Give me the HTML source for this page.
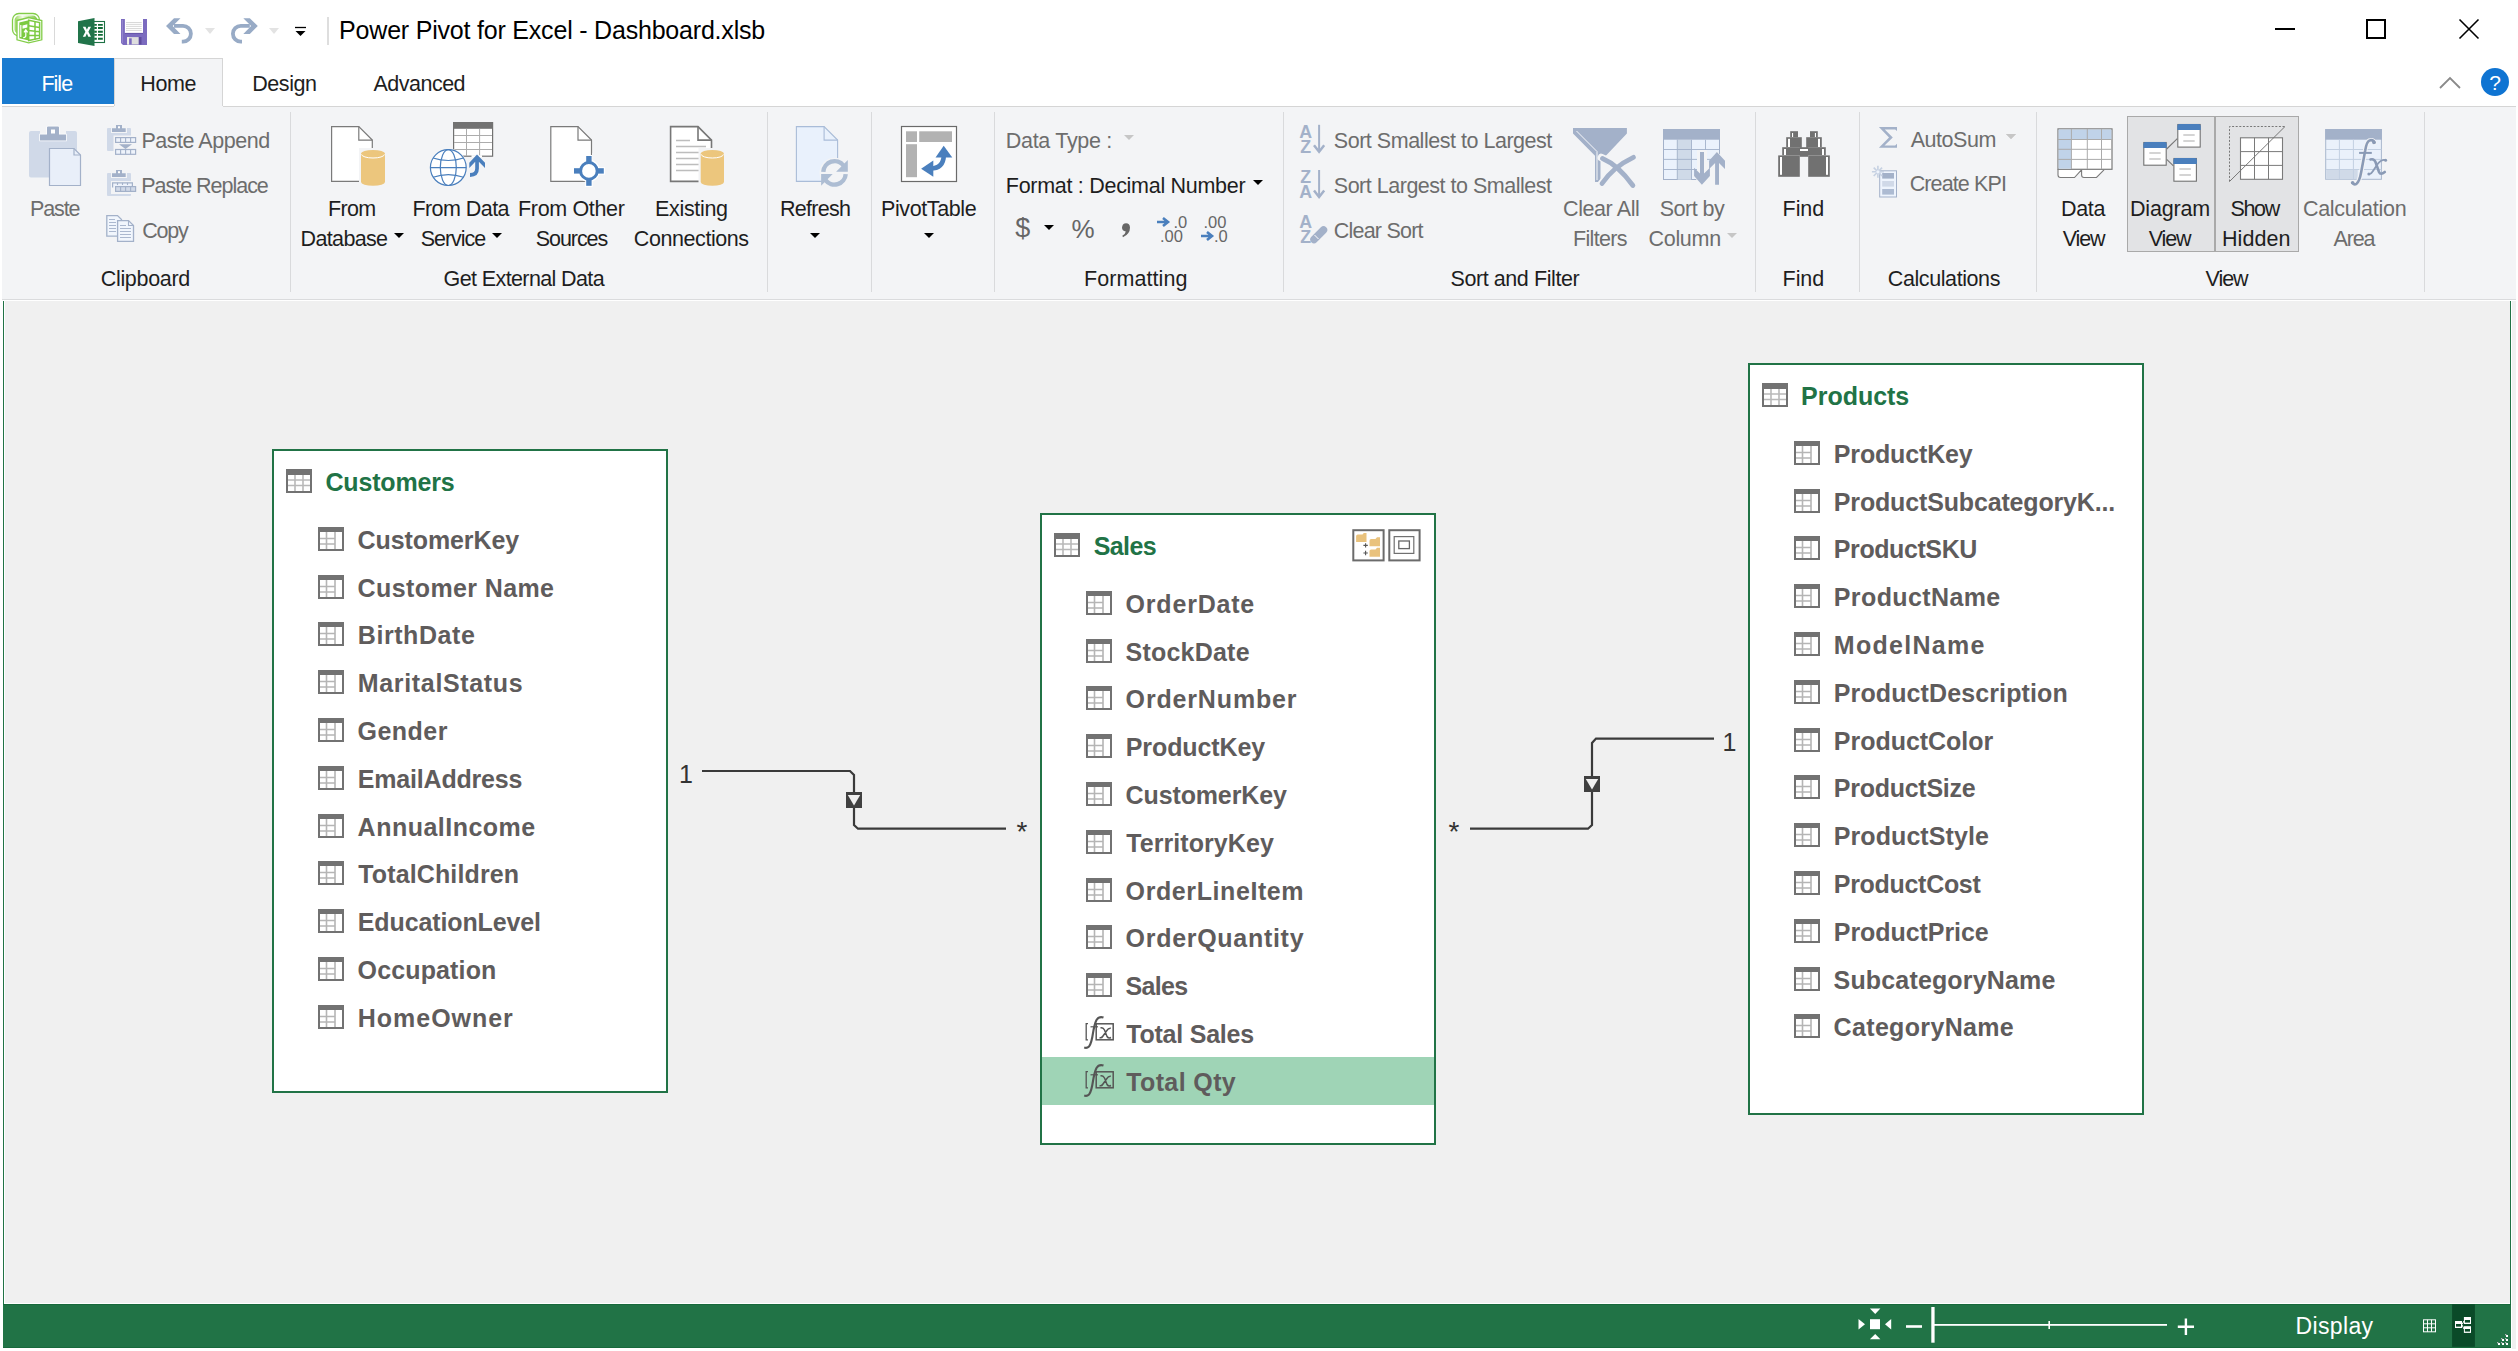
<!DOCTYPE html><html><head><meta charset="utf-8"><style>
html,body{margin:0;padding:0}
body{width:2518px;height:1351px;position:relative;overflow:hidden;background:#fff;font-family:'Liberation Sans', sans-serif}
.t{position:absolute;white-space:nowrap}
svg{overflow:visible}
</style></head><body>
<div class="t" style="left:339.10px;top:15.1px;font-size:25px;line-height:30.00px;color:#000;font-weight:400;letter-spacing:-0.200px;">Power Pivot for Excel - Dashboard.xlsb</div>
<div style="position:absolute;left:54px;top:17px;width:1px;height:28px;background:#d9d9d9"></div>
<div style="position:absolute;left:327px;top:17px;width:2px;height:28px;background:#dedede"></div>
<div style="position:absolute;left:2275px;top:28px;width:20px;height:2px;background:#000"></div>
<div style="position:absolute;left:2366px;top:19px;width:20px;height:20px;border:2px solid #000;box-sizing:border-box"></div>
<svg style="position:absolute;left:2459px;top:19px;" width="20" height="20" viewBox="0 0 20 20"><path d="M0.5 0.5L19.5 19.5M19.5 0.5L0.5 19.5" stroke="#000" stroke-width="1.6"/></svg>
<div style="position:absolute;left:2px;top:58px;width:112px;height:46px;background:#1a7bd0"></div>
<div class="t" style="left:41.40px;top:71.8px;font-size:21.5px;line-height:25.80px;color:#fff;font-weight:400;letter-spacing:-0.967px;">File</div>
<div style="position:absolute;left:114px;top:58px;width:109px;height:49px;background:#f3f4f6;border:1px solid #d5d5d5;border-bottom:none;box-sizing:border-box"></div>
<div class="t" style="left:140.20px;top:71.8px;font-size:21.5px;line-height:25.80px;color:#1e1e1e;font-weight:400;letter-spacing:-0.333px;">Home</div>
<div class="t" style="left:252.30px;top:71.8px;font-size:21.5px;line-height:25.80px;color:#1e1e1e;font-weight:400;letter-spacing:-0.460px;">Design</div>
<div class="t" style="left:373.50px;top:71.8px;font-size:21.5px;line-height:25.80px;color:#1e1e1e;font-weight:400;letter-spacing:-0.514px;">Advanced</div>
<svg style="position:absolute;left:2438px;top:76px;" width="24" height="14" viewBox="0 0 24 14"><path d="M2 12L12 2L22 12" fill="none" stroke="#8a8a8a" stroke-width="1.8"/></svg>
<div style="position:absolute;left:2481px;top:68px;width:28px;height:28px;border-radius:50%;background:#0f74d2"></div>
<div class="t" style="left:2481.0px;width:28px;text-align:center;top:70.1px;font-size:21px;line-height:25.20px;color:#fff;font-weight:400;">?</div>
<div style="position:absolute;left:2px;top:106px;width:2514px;height:193px;background:#f3f4f6"></div>
<div style="position:absolute;left:2px;top:106px;width:112px;height:1px;background:#d5d5d5"></div>
<div style="position:absolute;left:223px;top:106px;width:2293px;height:1px;background:#d5d5d5"></div>
<div style="position:absolute;left:2px;top:299px;width:2514px;height:1px;background:#dadbdd"></div>
<div style="position:absolute;left:290px;top:112px;width:1px;height:180px;background:#d9dadc"></div>
<div style="position:absolute;left:767px;top:112px;width:1px;height:180px;background:#d9dadc"></div>
<div style="position:absolute;left:871px;top:112px;width:1px;height:180px;background:#d9dadc"></div>
<div style="position:absolute;left:994px;top:112px;width:1px;height:180px;background:#d9dadc"></div>
<div style="position:absolute;left:1283px;top:112px;width:1px;height:180px;background:#d9dadc"></div>
<div style="position:absolute;left:1755px;top:112px;width:1px;height:180px;background:#d9dadc"></div>
<div style="position:absolute;left:1859px;top:112px;width:1px;height:180px;background:#d9dadc"></div>
<div style="position:absolute;left:2036px;top:112px;width:1px;height:180px;background:#d9dadc"></div>
<div style="position:absolute;left:2424px;top:112px;width:1px;height:180px;background:#d9dadc"></div>
<div class="t" style="left:100.70px;top:266.6px;font-size:21.5px;line-height:25.80px;color:#1e1e1e;font-weight:400;letter-spacing:-0.300px;">Clipboard</div>
<div class="t" style="left:443.60px;top:266.6px;font-size:21.5px;line-height:25.80px;color:#1e1e1e;font-weight:400;letter-spacing:-0.613px;">Get External Data</div>
<div class="t" style="left:1084.00px;top:266.6px;font-size:21.5px;line-height:25.80px;color:#1e1e1e;font-weight:400;letter-spacing:0.067px;">Formatting</div>
<div class="t" style="left:1450.50px;top:266.6px;font-size:21.5px;line-height:25.80px;color:#1e1e1e;font-weight:400;letter-spacing:-0.421px;">Sort and Filter</div>
<div class="t" style="left:1782.60px;top:266.6px;font-size:21.5px;line-height:25.80px;color:#1e1e1e;font-weight:400;letter-spacing:-0.067px;">Find</div>
<div class="t" style="left:1887.80px;top:266.6px;font-size:21.5px;line-height:25.80px;color:#1e1e1e;font-weight:400;letter-spacing:-0.409px;">Calculations</div>
<div class="t" style="left:2205.50px;top:266.6px;font-size:21.5px;line-height:25.80px;color:#1e1e1e;font-weight:400;letter-spacing:-1.033px;">View</div>
<div class="t" style="left:30.00px;top:196.8px;font-size:21.5px;line-height:25.80px;color:#6d6d6d;font-weight:400;letter-spacing:-1.125px;">Paste</div>
<div class="t" style="left:328.00px;top:196.8px;font-size:21.5px;line-height:25.80px;color:#1e1e1e;font-weight:400;letter-spacing:-0.667px;">From</div>
<div class="t" style="left:300.60px;top:226.6px;font-size:21.5px;line-height:25.80px;color:#1e1e1e;font-weight:400;letter-spacing:-0.657px;">Database</div>
<div class="t" style="left:412.40px;top:196.8px;font-size:21.5px;line-height:25.80px;color:#1e1e1e;font-weight:400;letter-spacing:-0.550px;">From Data</div>
<div class="t" style="left:420.80px;top:226.6px;font-size:21.5px;line-height:25.80px;color:#1e1e1e;font-weight:400;letter-spacing:-1.050px;">Service</div>
<div class="t" style="left:518.00px;top:196.8px;font-size:21.5px;line-height:25.80px;color:#1e1e1e;font-weight:400;letter-spacing:-0.333px;">From Other</div>
<div class="t" style="left:535.70px;top:226.6px;font-size:21.5px;line-height:25.80px;color:#1e1e1e;font-weight:400;letter-spacing:-1.050px;">Sources</div>
<div class="t" style="left:655.00px;top:196.8px;font-size:21.5px;line-height:25.80px;color:#1e1e1e;font-weight:400;letter-spacing:-0.329px;">Existing</div>
<div class="t" style="left:633.80px;top:226.6px;font-size:21.5px;line-height:25.80px;color:#1e1e1e;font-weight:400;letter-spacing:-0.420px;">Connections</div>
<div class="t" style="left:780.00px;top:196.8px;font-size:21.5px;line-height:25.80px;color:#1e1e1e;font-weight:400;letter-spacing:-0.733px;">Refresh</div>
<div class="t" style="left:881.00px;top:196.8px;font-size:21.5px;line-height:25.80px;color:#1e1e1e;font-weight:400;letter-spacing:-0.389px;">PivotTable</div>
<div class="t" style="left:1563.00px;top:196.8px;font-size:21.5px;line-height:25.80px;color:#6d6d6d;font-weight:400;letter-spacing:-0.400px;">Clear All</div>
<div class="t" style="left:1573.00px;top:226.6px;font-size:21.5px;line-height:25.80px;color:#6d6d6d;font-weight:400;letter-spacing:-0.667px;">Filters</div>
<div class="t" style="left:1659.70px;top:196.8px;font-size:21.5px;line-height:25.80px;color:#6d6d6d;font-weight:400;letter-spacing:-0.500px;">Sort by</div>
<div class="t" style="left:1648.50px;top:226.6px;font-size:21.5px;line-height:25.80px;color:#6d6d6d;font-weight:400;letter-spacing:-0.300px;">Column</div>
<div class="t" style="left:1782.60px;top:196.8px;font-size:21.5px;line-height:25.80px;color:#1e1e1e;font-weight:400;letter-spacing:-0.067px;">Find</div>
<div class="t" style="left:2061.00px;top:196.8px;font-size:21.5px;line-height:25.80px;color:#1e1e1e;font-weight:400;letter-spacing:-0.333px;">Data</div>
<div class="t" style="left:2062.80px;top:226.6px;font-size:21.5px;line-height:25.80px;color:#1e1e1e;font-weight:400;letter-spacing:-1.133px;">View</div>
<div style="position:absolute;left:2127px;top:116px;width:172px;height:136px;background:#e2e3e5;border:1px solid #a9a9a9;box-sizing:border-box"></div>
<div style="position:absolute;left:2214px;top:116px;width:2px;height:136px;background:#a9a9a9"></div>
<div class="t" style="left:2130.00px;top:196.8px;font-size:21.5px;line-height:25.80px;color:#1e1e1e;font-weight:400;letter-spacing:-0.183px;">Diagram</div>
<div class="t" style="left:2148.80px;top:226.6px;font-size:21.5px;line-height:25.80px;color:#1e1e1e;font-weight:400;letter-spacing:-1.133px;">View</div>
<div class="t" style="left:2230.40px;top:196.8px;font-size:21.5px;line-height:25.80px;color:#1e1e1e;font-weight:400;letter-spacing:-1.300px;">Show</div>
<div class="t" style="left:2222.00px;top:226.6px;font-size:21.5px;line-height:25.80px;color:#1e1e1e;font-weight:400;letter-spacing:0.080px;">Hidden</div>
<div class="t" style="left:2302.90px;top:196.8px;font-size:21.5px;line-height:25.80px;color:#6d6d6d;font-weight:400;letter-spacing:-0.260px;">Calculation</div>
<div class="t" style="left:2333.50px;top:226.6px;font-size:21.5px;line-height:25.80px;color:#6d6d6d;font-weight:400;letter-spacing:-1.167px;">Area</div>
<svg style="position:absolute;left:394px;top:233px;" width="10" height="5" viewBox="0 0 10 5"><path d="M0 0H10L5.0 5Z" fill="#000"/></svg>
<svg style="position:absolute;left:492px;top:233px;" width="10" height="5" viewBox="0 0 10 5"><path d="M0 0H10L5.0 5Z" fill="#000"/></svg>
<svg style="position:absolute;left:810px;top:233px;" width="10" height="5" viewBox="0 0 10 5"><path d="M0 0H10L5.0 5Z" fill="#000"/></svg>
<svg style="position:absolute;left:924px;top:233px;" width="10" height="5" viewBox="0 0 10 5"><path d="M0 0H10L5.0 5Z" fill="#000"/></svg>
<svg style="position:absolute;left:1727px;top:233px;" width="10" height="5" viewBox="0 0 10 5"><path d="M0 0H10L5.0 5Z" fill="#c6c6c6"/></svg>
<div class="t" style="left:141.40px;top:129.1px;font-size:21.5px;line-height:25.80px;color:#6d6d6d;font-weight:400;letter-spacing:-0.464px;">Paste Append</div>
<div class="t" style="left:141.20px;top:173.6px;font-size:21.5px;line-height:25.80px;color:#6d6d6d;font-weight:400;letter-spacing:-1.017px;">Paste Replace</div>
<div class="t" style="left:142.20px;top:218.7px;font-size:21.5px;line-height:25.80px;color:#6d6d6d;font-weight:400;letter-spacing:-1.200px;">Copy</div>
<div class="t" style="left:1005.80px;top:128.9px;font-size:21.5px;line-height:25.80px;color:#6d6d6d;font-weight:400;letter-spacing:-0.310px;">Data Type :</div>
<svg style="position:absolute;left:1124px;top:135px;" width="10" height="5" viewBox="0 0 10 5"><path d="M0 0H10L5.0 5Z" fill="#c6c6c6"/></svg>
<div class="t" style="left:1005.80px;top:173.9px;font-size:21.5px;line-height:25.80px;color:#1e1e1e;font-weight:400;letter-spacing:-0.286px;">Format : Decimal Number</div>
<svg style="position:absolute;left:1253px;top:180px;" width="10" height="5" viewBox="0 0 10 5"><path d="M0 0H10L5.0 5Z" fill="#000"/></svg>
<div class="t" style="left:1333.80px;top:128.9px;font-size:21.5px;line-height:25.80px;color:#6d6d6d;font-weight:400;letter-spacing:-0.474px;">Sort Smallest to Largest</div>
<div class="t" style="left:1333.80px;top:173.9px;font-size:21.5px;line-height:25.80px;color:#6d6d6d;font-weight:400;letter-spacing:-0.487px;">Sort Largest to Smallest</div>
<div class="t" style="left:1333.80px;top:218.5px;font-size:21.5px;line-height:25.80px;color:#6d6d6d;font-weight:400;letter-spacing:-0.789px;">Clear Sort</div>
<div class="t" style="left:1910.70px;top:128.1px;font-size:21.5px;line-height:25.80px;color:#6d6d6d;font-weight:400;letter-spacing:-0.450px;">AutoSum</div>
<svg style="position:absolute;left:2006px;top:134px;" width="10" height="5" viewBox="0 0 10 5"><path d="M0 0H10L5.0 5Z" fill="#c6c6c6"/></svg>
<div class="t" style="left:1909.70px;top:171.5px;font-size:21.5px;line-height:25.80px;color:#6d6d6d;font-weight:400;letter-spacing:-0.878px;">Create KPI</div>
<div style="position:absolute;left:2px;top:300px;width:2516px;height:1051px;background:#fff"></div>
<div style="position:absolute;left:5px;top:301px;width:2505px;height:1002px;background:#f0f0f0"></div>
<div style="position:absolute;left:3px;top:301px;width:1px;height:1047px;background:#217346"></div>
<div style="position:absolute;left:2510px;top:301px;width:1px;height:1047px;background:#217346"></div>
<div style="position:absolute;left:2512px;top:301px;width:4px;height:1048px;background:#f0f0f0"></div>
<svg style="position:absolute;left:0;top:0" width="2518" height="1351">
<defs><linearGradient id="ppg" x1="0" x2="1"><stop offset="0" stop-color="#9ad85f"/><stop offset="0.35" stop-color="#f4fbe9"/><stop offset="1" stop-color="#7cc93f"/></linearGradient></defs>
<rect x="12.5" y="13.5" width="27" height="22.5" rx="6.5" fill="#fff" stroke="#82cd48" stroke-width="1.3"/>
<rect x="14.6" y="15.6" width="22.8" height="18.3" rx="4.5" fill="url(#ppg)"/>
<path d="M17 20.5L28.7 17.5L41.8 20.5V39.8L28.7 42.8L17 39.8Z" fill="#fff" stroke="#82cd48" stroke-width="1.3"/>
<path d="M19.3 22.6L28.7 20.2V40.6L19.3 38.2Z" fill="#7cca42"/>
<path d="M28.7 20.2L39.6 22.6V38.2L28.7 40.6Z" fill="#fff" stroke="#7cca42" stroke-width="1.5"/>
<path d="M35 21.5V39.4M28.7 25.8L39.6 27.6M28.7 30.6L39.6 31.8M28.7 35.4L39.6 35.4" stroke="#7cca42" stroke-width="1.5"/>
<path d="M20.8 25V37" stroke="#fff" stroke-width="1.2"/>
<path d="M22.5 25.5L27.3 24.3V27.5L22.5 28.7Z" fill="#fff"/>
<path d="M25.8 36.5V30.5M24 32.3L25.8 29.8L27.6 32.3M23.2 37.5Q25.8 37.8 25.8 35" stroke="#fff" stroke-width="1.2" fill="none"/>

<rect x="93.5" y="21.5" width="11" height="21" fill="#fff" stroke="#1e7145" stroke-width="1.1"/>
<path d="M94.2 24.9H96.8M98 24.9H102.8M94.2 28H96.8M98 28H102.8M94.2 31.8H96.8M98 31.8H102.8M94.2 34.9H96.8M98 34.9H102.8M94.2 38.7H96.8M98 38.7H102.8" stroke="#0f6b35" stroke-width="1.9"/>
<path d="M78 21.2L94.5 18V46L78 43Z" fill="#21744a"/>
<path d="M82.8 26.8H85.5L86.9 29.8L88.3 26.8H91L88.4 31.7L91 36.7H88.3L86.9 33.6L85.4 36.7H82.8L85.4 31.7Z" fill="#fff"/>

<path d="M121 19H147V45H123L121 43Z" fill="#7b6bbf"/>
<path d="M122.3 20V43" stroke="#9a8bd3" stroke-width="1"/>
<rect x="124.9" y="19" width="18.1" height="14.1" fill="#fff"/>
<path d="M124.9 33.4H143" stroke="#5f4ea3" stroke-width="0.9"/>
<path d="M126 22.5H141.7M126 24.4H141.7M126 26.4H141.7M126 28.5H141.7M126 30.4H141.7" stroke="#cfcfcf" stroke-width="0.8"/>
<rect x="127.1" y="37.1" width="11.7" height="7.4" fill="#dedede"/>
<rect x="127.1" y="37.1" width="2" height="7.4" fill="#f3f3ea"/>
<rect x="129.1" y="38.3" width="2.6" height="6.2" fill="#7b6bbf"/>
<rect x="138.8" y="37" width="2.7" height="7.5" fill="#5e4c9e"/>
<path d="M174 25.8H183A7.9 7.9 0 0 1 183 41.6H181.8" fill="none" stroke="#98abc6" stroke-width="3.8"/><path d="M166 26L174 18.2H180.5L172.7 26L180.5 33.9H174Z" fill="#98abc6"/><g transform="translate(423.8,0) scale(-1,1)"><path d="M174 25.8H183A7.9 7.9 0 0 1 183 41.6H181.8" fill="none" stroke="#98abc6" stroke-width="3.8"/><path d="M166 26L174 18.2H180.5L172.7 26L180.5 33.9H174Z" fill="#98abc6"/></g><path d="M205 28H215L210 34Z" fill="#e3e3e3"/><path d="M269 28H279L274 34Z" fill="#e3e3e3"/><path d="M295 27.5H306" stroke="#000" stroke-width="1.3"/><path d="M295.5 31H305.5L300.5 36Z" fill="#000"/>
<path d="M31 131H40V140.5H66V131H75Q77 131 77 133V177.5H31Q29 177.5 29 175.5V133Q29 131 31 131Z" fill="#d0d9e8"/>
<path d="M40 134.5H47V127.5Q47 126.5 48 126.5H58Q59 126.5 59 127.5V134.5H66V140.5H40Z" fill="#a3b1c9" stroke="#fff" stroke-width="1.4" paint-order="stroke"/>
<rect x="51" y="129.5" width="4" height="4" fill="#fff"/>
<path d="M49.5 148.5H74L80.5 155V185.5H49.5Z" fill="#e9eff9" stroke="#a3b1c9" stroke-width="1.2"/>
<path d="M74 148.5V155H80.5" fill="none" stroke="#a3b1c9" stroke-width="1.2"/>

<rect x="107" y="128" width="24" height="23" rx="1" fill="#d0d9e8"/>
<path d="M111 127H127V133H111Z" fill="#f3f4f6"/>
<path d="M112 128.2H116V125.1H122V128.2H125.7V132H112Z" fill="#a3b1c9"/>
<rect x="118" y="126.3" width="2" height="2" fill="#fff"/>
<rect x="113.5" y="135.5" width="24" height="21" fill="#f3f4f6"/>
<rect x="115.6" y="137.6" width="20" height="4.8" fill="#eef3fb" stroke="#a3b1c9" stroke-width="1.2"/>
<path d="M120.6 137.6V142.4M125.6 137.6V142.4M130.6 137.6V142.4" stroke="#a3b1c9" stroke-width="1.1"/>
<path d="M119 144.2H132L125.5 149Z" fill="#a3b1c9"/>
<rect x="115.6" y="149.5" width="20" height="4.8" fill="#eef3fb" stroke="#a3b1c9" stroke-width="1.2"/>
<path d="M120.6 149.5V154.3M125.6 149.5V154.3M130.6 149.5V154.3" stroke="#a3b1c9" stroke-width="1.1"/>

<rect x="107" y="173" width="24" height="23" rx="1" fill="#d0d9e8"/>
<path d="M111 172H127V178H111Z" fill="#f3f4f6"/>
<path d="M112 173.2H116V170H122V173.2H125.7V177H112Z" fill="#a3b1c9"/>
<rect x="118" y="171.2" width="2" height="2" fill="#fff"/>
<rect x="111" y="181" width="26" height="13" fill="#f3f4f6"/>
<path d="M112.6 187.5V182.8H132.4V187" fill="#eef3fb" stroke="#a3b1c9" stroke-width="1.2"/>
<path d="M117.5 182.8V185M122.5 182.8V185M127.5 182.8V185" stroke="#a3b1c9" stroke-width="1.1"/>
<rect x="115.6" y="186.6" width="20" height="4.8" fill="#d0d9e8" stroke="#a3b1c9" stroke-width="1.2"/>
<path d="M120.6 186.6V191.4M125.6 186.6V191.4M130.6 186.6V191.4" stroke="#a3b1c9" stroke-width="1.1"/>

<path d="M106.8 215.6H117.5L121.5 219.5V236.2H106.8Z" fill="#f1f6fd" stroke="#a3b1c9" stroke-width="1.3"/>
<path d="M109 219.5H115M109 222.5H116M109 225.5H116M109 228.5H116M109 231.5H116" stroke="#a3b1c9" stroke-width="0.9"/>
<path d="M117.6 220.6H128.5L133.5 225.5V241.3H117.6Z" fill="#f1f6fd" stroke="#a3b1c9" stroke-width="1.3"/>
<path d="M128.5 220.6V225.5H133.5" fill="none" stroke="#a3b1c9" stroke-width="1.1"/>
<path d="M120 225.5H126M120 228.5H131M120 231.5H131M120 234.5H131M120 237.5H131" stroke="#a3b1c9" stroke-width="0.9"/>
<path d="M331.6 126.6H358.8L372.3 140.1V181.4H331.6Z" fill="#fff" stroke="#7a7a7a" stroke-width="1.2"/><path d="M358.8 126.6V140.1H372.3" fill="none" stroke="#7a7a7a" stroke-width="1.2"/><rect x="359" y="148" width="28" height="40" fill="#f3f4f6"/><path d="M361 153.6A12.0 3.6 0 0 1 385 153.6V182.1A12.0 3.6 0 0 1 361 182.1Z" fill="#ecc67d"/><path d="M361.6 154.4A11.4 3.6 0 0 0 384.4 154.4" fill="none" stroke="#fff" stroke-width="1"/>
<rect x="453.6" y="122.6" width="39" height="33.6" fill="#fff" stroke="#727272" stroke-width="1.2"/>
<rect x="453" y="122.3" width="40" height="6.5" fill="#727272"/>
<path d="M466.5 128.8V156M479.6 128.8V156M454 135.5H492M454 142.5H492M454 149.5H492" stroke="#acacac" stroke-width="1"/>
<rect x="471.5" y="155.2" width="10.5" height="2" fill="#fff"/>
<circle cx="448.3" cy="167.6" r="19" fill="#f3f4f6"/>
<circle cx="448.3" cy="167.6" r="17.9" fill="#fff" stroke="#4a7fbd" stroke-width="1.2"/>
<ellipse cx="448.3" cy="167.6" rx="8" ry="17.9" fill="none" stroke="#4a7fbd" stroke-width="1.2"/>
<path d="M430.4 167.6H466.2M433 158Q448.3 163 463.6 158M433 177.2Q448.3 172 463.6 177.2" fill="none" stroke="#4a7fbd" stroke-width="1.2"/>
<path d="M477 154.4L485 162.7V168L478.9 161.8V168.5Q478.9 176.9 470 176.9V173Q475.2 173 475.2 168.5V161.8L469.3 168V162.7Z" fill="#4a7fbd"/>
<path d="M550.8 126.6H578.0L591.5 140.1V181.4H550.8Z" fill="#fff" stroke="#7a7a7a" stroke-width="1.2"/><path d="M578.0 126.6V140.1H591.5" fill="none" stroke="#7a7a7a" stroke-width="1.2"/>
<circle cx="588.9" cy="170.9" r="8.3" fill="none" stroke="#fff" stroke-width="5.5"/><rect x="585.2" y="155" width="7.4" height="32" fill="#fff"/><rect x="573" y="167.2" width="32" height="7.4" fill="#fff"/><rect x="592" y="153" width="4" height="3" fill="#f3f4f6"/><rect x="605" y="165" width="3" height="12" fill="#f3f4f6"/>
<circle cx="588.9" cy="170.9" r="8.3" fill="#fff" stroke="#4a7fbd" stroke-width="3"/>
<rect x="586.2" y="156" width="5.4" height="6" fill="#4a7fbd"/><rect x="586.2" y="179.8" width="5.4" height="6" fill="#4a7fbd"/>
<rect x="574" y="168.2" width="6" height="5.4" fill="#4a7fbd"/><rect x="597.8" y="168.2" width="6" height="5.4" fill="#4a7fbd"/>
<path d="M670.6 126.6H698.0L711.5 140.1V181.4H670.6Z" fill="#fff" stroke="#777" stroke-width="1.6"/><path d="M698.0 126.6V140.1H711.5" fill="none" stroke="#777" stroke-width="1.6"/><path d="M676 140.5H690M676 146.5H706M676 152.5H706M676 158.5H706M676 164.5H706M676 170.5H706" stroke="#bdbdbd" stroke-width="1.6"/><rect x="698.5" y="148" width="28" height="40" fill="#f3f4f6"/><path d="M700.7 153.6A11.649999999999977 3.6 0 0 1 724 153.6V182.1A11.649999999999977 3.6 0 0 1 700.7 182.1Z" fill="#ecc67d"/><path d="M701.3000000000001 154.4A11.049999999999978 3.6 0 0 0 723.4 154.4" fill="none" stroke="#fff" stroke-width="1"/><path d="M796.4 126.6H824.1L837.6 140.1V181.4H796.4Z" fill="#e9f1fc" stroke="#a9bcd8" stroke-width="1.1"/><path d="M824.1 126.6V140.1H837.6" fill="none" stroke="#a9bcd8" stroke-width="1.1"/>
<circle cx="834.5" cy="172.8" r="15" fill="#f3f4f6"/>
<path d="M823.3 171.8A11.3 11.3 0 0 1 843.5 165.5" fill="none" stroke="#adbdd3" stroke-width="4.4"/>
<path d="M845.7 174.1A11.3 11.3 0 0 1 825.5 180.2" fill="none" stroke="#adbdd3" stroke-width="4.4"/>
<path d="M847.8 159.9V171.8H836.1Z" fill="#adbdd3"/>
<path d="M821.1 185.8V174.1H832.7Z" fill="#adbdd3"/>

<rect x="901.5" y="126.5" width="55" height="55" fill="#fff" stroke="#6a6a6a" stroke-width="1.2"/>
<rect x="906" y="131.3" width="11" height="10.7" fill="#b2b2b2"/>
<rect x="919.2" y="131.3" width="32.8" height="10.7" fill="#b2b2b2"/>
<rect x="906" y="144.2" width="11" height="33" fill="#b2b2b2"/>
<path d="M930 168.6Q943.6 168.6 943.8 155" fill="none" stroke="#4a7fbd" stroke-width="4.6"/>
<path d="M921.1 168.7L933.3 160.5V176.8Z" fill="#4a7fbd"/>
<path d="M943.7 145.7L935.5 157.6H952.3Z" fill="#4a7fbd"/>

<text x="1022.8" y="237" text-anchor="middle" font-family="Liberation Sans" font-size="27" fill="#666666">$</text>
<path d="M1044 225H1054L1049 230Z" fill="#000"/>
<text x="1083" y="238.3" text-anchor="middle" font-family="Liberation Sans" font-size="26" fill="#666666">%</text>
<path d="M1124.5 223.5Q1129.6 222.5 1130 227.5Q1130 234 1123 237.3L1122.3 235.8Q1125.5 233.8 1125.8 231.5Q1122 231 1122 227.5Q1122.5 224 1124.5 223.5Z" fill="#666666"/>
<text x="1173.5" y="228.2" font-family="Liberation Sans" font-size="16.5" fill="#666666">.0</text>
<text x="1160" y="242.2" font-family="Liberation Sans" font-size="16.5" fill="#666666">.00</text>
<path d="M1157 222H1167M1163 218L1168 222L1163 226" fill="none" stroke="#4a7fbd" stroke-width="2.6"/>
<text x="1203.5" y="228.2" font-family="Liberation Sans" font-size="16.5" fill="#666666">.00</text>
<text x="1214" y="242.2" font-family="Liberation Sans" font-size="16.5" fill="#666666">.0</text>
<path d="M1201 236H1211M1207 232L1212 236L1207 240" fill="none" stroke="#4a7fbd" stroke-width="2.6"/>
<text x="1305.6" y="137.8" text-anchor="middle" font-family="Liberation Sans" font-weight="700" font-size="17.8" fill="#a3b1c9">A</text><text x="1305.6" y="153.2" text-anchor="middle" font-family="Liberation Sans" font-weight="700" font-size="17.8" fill="#a3b1c9">Z</text><path d="M1319.1 124.8V151.3" stroke="#a3b1c9" stroke-width="2"/><path d="M1314 145.3L1319.1 151.8L1324.2 145.3" fill="none" stroke="#a3b1c9" stroke-width="2.5"/><text x="1305.6" y="183" text-anchor="middle" font-family="Liberation Sans" font-weight="700" font-size="17.8" fill="#a3b1c9">Z</text><text x="1305.6" y="198.4" text-anchor="middle" font-family="Liberation Sans" font-weight="700" font-size="17.8" fill="#a3b1c9">A</text><path d="M1319.1 170V196.5" stroke="#a3b1c9" stroke-width="2"/><path d="M1314 190.5L1319.1 197L1324.2 190.5" fill="none" stroke="#a3b1c9" stroke-width="2.5"/><text x="1305.6" y="227.7" text-anchor="middle" font-family="Liberation Sans" font-weight="700" font-size="17.8" fill="#a3b1c9">A</text><text x="1305.6" y="243.1" text-anchor="middle" font-family="Liberation Sans" font-weight="700" font-size="17.8" fill="#a3b1c9">Z</text><path d="M1314 239.5L1323.5 230" stroke="#a3b1c9" stroke-width="7.5" stroke-linecap="round"/><path d="M1314.5 235L1318.5 239" stroke="#fff" stroke-width="1"/>
<path d="M1573 128H1626.9V133.5L1607.5 154L1600.5 161V181.9H1595V155.8L1573 133.5Z" fill="#a3b1c9"/>
<path d="M1576.5 131L1597 151.5V180" fill="none" stroke="#fff" stroke-width="0.9"/>
<path d="M1601.3 157.5Q1618 164 1632.9 185.5" fill="none" stroke="#f3f4f6" stroke-width="7.5" stroke-linecap="round"/>
<path d="M1633.4 157.3Q1613 167 1601 184.2" fill="none" stroke="#f3f4f6" stroke-width="7.5" stroke-linecap="round"/>
<path d="M1602.5 158.5Q1618 165 1632.9 185.5" fill="none" stroke="#a3b1c9" stroke-width="4.8" stroke-linecap="round"/>
<path d="M1633.4 157.3Q1613 167 1602 183.5" fill="none" stroke="#a3b1c9" stroke-width="4.8" stroke-linecap="round"/>

<rect x="1663.5" y="129.5" width="56" height="50" fill="#ebf2fc" stroke="#a3b1c9" stroke-width="1"/>
<rect x="1677.3" y="139.7" width="14.2" height="40" fill="#cfdae8"/>
<rect x="1663" y="129" width="57" height="10.7" fill="#a3b1c9"/>
<path d="M1677.3 139.7V179.8M1691.5 139.7V179.8M1705.5 139.7V179.8M1663.5 149.5H1719.5M1663.5 159.4H1719.5M1663.5 169.5H1719.5" stroke="#a3b1c9" stroke-width="0.9"/>
<path d="M1697 150V175H1692L1702 185.5L1712 175H1707V150Z" fill="#f3f4f6"/>
<path d="M1707 188V162H1712L1717 151L1726 162V188Z" fill="#f3f4f6"/>
<path d="M1700 152H1704V173.5L1709.9 167.8V176L1701.9 184.8L1694.1 176V167.8L1700 173.5Z" fill="#a3b1c9"/>
<path d="M1715.1 184.8H1719V163L1725 169V160.8L1716.9 152.1L1709.1 160.8V169L1715.1 163Z" fill="#a3b1c9"/>
<rect x="1790.2" y="131.2" width="7.8" height="6" fill="#717171"/><rect x="1810.0" y="131.2" width="7.8" height="6" fill="#717171"/><rect x="1786.2" y="137.2" width="15.6" height="10" fill="#717171"/><rect x="1806.2" y="137.2" width="15.6" height="10" fill="#717171"/><rect x="1782.2" y="147.2" width="19.6" height="8.2" fill="#717171"/><rect x="1806.2" y="147.2" width="19.6" height="8.2" fill="#717171"/><rect x="1778.2" y="155.4" width="21.6" height="21.4" fill="#717171"/><rect x="1808.2" y="155.4" width="21.6" height="21.4" fill="#717171"/><rect x="1799.8" y="147.2" width="8.4" height="9.6" fill="#717171"/><rect x="1792" y="133" width="1.1" height="4" fill="#fff"/><rect x="1814.9" y="133" width="1.1" height="4" fill="#fff"/><rect x="1788" y="138.8" width="2" height="8.2" fill="#fff"/><rect x="1818.0" y="138.8" width="2" height="8.2" fill="#fff"/><rect x="1784" y="149" width="2" height="6" fill="#fff"/><rect x="1822.0" y="149" width="2" height="6" fill="#fff"/><rect x="1780" y="157" width="2" height="17.8" fill="#fff"/><rect x="1826.0" y="157" width="2" height="17.8" fill="#fff"/><rect x="1800" y="149" width="8" height="2" fill="#fff"/>
<path d="M1878.9 127.1H1897V131L1895.2 129.6H1884.8L1892.8 137.5L1884.5 145.4H1895.2L1897 143.8V147.8H1878.9L1889 137.5Z" fill="#a3b1c9"/>
<path d="M2006 134H2016L2011 139Z" fill="#c6c6c6"/>
<rect x="1879.7" y="170.8" width="16.8" height="26.2" fill="#eef4fd" stroke="#a3b1c9" stroke-width="1"/>
<rect x="1882.2" y="173" width="11.8" height="5.6" fill="#a3b1c9"/>
<rect x="1882.2" y="181" width="11.8" height="5.6" fill="#d0d9e8"/>
<rect x="1882.2" y="189" width="11.8" height="5.6" fill="#adbbd2"/>
<path d="M1877.9 165.8V177.8M1871.9 171.8H1883.9M1873.7 167.6L1882.1 176M1882.1 167.6L1873.7 176" stroke="#c6d1e2" stroke-width="1.6"/><circle cx="1877.9" cy="171.8" r="1.6" fill="#eef3fb"/>

<path d="M2058 169.3V175Q2058 177.5 2060.5 177.5H2074.5L2081.5 169.8M2081.6 169.5V175Q2081.6 177.5 2084 177.5H2096.5L2104 169.8" fill="#fff" stroke="#7a7a7a" stroke-width="1.1"/>
<rect x="2058" y="128.9" width="54" height="40.4" fill="#fff" stroke="#7a7a7a" stroke-width="1.2"/>
<rect x="2058.6" y="129.5" width="52.8" height="10" fill="#c0d3e9"/>
<rect x="2058.6" y="139.5" width="12.8" height="29.2" fill="#c0d3e9"/>
<path d="M2071.4 129V169M2087.3 129V169M2101.5 129V169M2058 139.5H2112M2058 149.3H2112M2058 159.4H2112" stroke="#ababab" stroke-width="1"/>
<path d="M2166.7 149L2177.3 138.6M2166.7 159.4L2173.4 165.8" stroke="#777" stroke-width="1.1"/><rect x="2143.8" y="142.5" width="22.399999999999636" height="22.69999999999999" fill="#fff" stroke="#727272" stroke-width="1.1"/><path d="M2143.3 148V144Q2143.3 142 2145.3 142H2164.7Q2166.7 142 2166.7 144V148Z" fill="#4a7fbd"/><path d="M2149.3 153H2160.7M2149.3 159H2160.7" stroke="#a9a9a9" stroke-width="1"/><rect x="2177.8" y="124.5" width="22.399999999999636" height="22.599999999999994" fill="#fff" stroke="#727272" stroke-width="1.1"/><path d="M2177.3 130V126Q2177.3 124 2179.3 124H2198.7Q2200.7 124 2200.7 126V130Z" fill="#4a7fbd"/><path d="M2183.3 135H2194.7M2183.3 141H2194.7" stroke="#a9a9a9" stroke-width="1"/><rect x="2173.9" y="158.5" width="22.5" height="22.69999999999999" fill="#fff" stroke="#727272" stroke-width="1.1"/><path d="M2173.4 164V160Q2173.4 158 2175.4 158H2194.9Q2196.9 158 2196.9 160V164Z" fill="#4a7fbd"/><path d="M2179.4 169H2190.9M2179.4 175H2190.9" stroke="#a9a9a9" stroke-width="1"/>
<path d="M2229.5 181.5V126.5H2285" fill="none" stroke="#777" stroke-width="1" stroke-dasharray="2 1.6"/>
<rect x="2240.5" y="137.8" width="42" height="41.5" fill="#fff" stroke="#7a7a7a" stroke-width="1.1"/>
<path d="M2254.5 137.8V179.3M2268.5 137.8V179.3M2240.5 151.6H2282.5M2240.5 165.4H2282.5" stroke="#7a7a7a" stroke-width="1"/>
<path d="M2229.5 181.5L2285 126.5" stroke="#777" stroke-width="1"/>

<rect x="2325.7" y="129.6" width="55.7" height="49.7" fill="#eaf1fb" stroke="#a9b7cd" stroke-width="1"/>
<rect x="2325.2" y="129.1" width="56.7" height="10.6" fill="#a3b1c9"/>
<rect x="2326.2" y="169.5" width="31.5" height="9.8" fill="#d0dae8"/>
<path d="M2339.4 139.7V179.3M2353.4 139.7V179.3M2326 149.5H2381.4M2326 159.4H2381.4M2326 169.5H2381.4" stroke="#c2cfe1" stroke-width="1"/>
<path d="M2352 186H2378V151H2358Z" fill="none"/>
<path d="M2374.5 142.6Q2373 139.2 2369.3 140.6Q2366.5 142 2365.2 150.5L2361.2 172Q2359.5 181.5 2356.5 183.8Q2354.2 185.2 2352.6 183" fill="none" stroke="#f3f4f6" stroke-width="4.5" stroke-linecap="round"/>
<path d="M2374.5 142.6Q2373 139.2 2369.3 140.6Q2366.5 142 2365.2 150.5L2361.2 172Q2359.5 181.5 2356.5 183.8Q2354.2 185.2 2352.6 183" fill="none" stroke="#8a9ab5" stroke-width="2.6" stroke-linecap="round"/>
<circle cx="2373.9" cy="142.4" r="1.8" fill="#8a9ab5"/><circle cx="2352.6" cy="182.8" r="1.8" fill="#8a9ab5"/>
<path d="M2359.1 152.9H2371.8" stroke="#8a9ab5" stroke-width="2"/>
<path d="M2370.5 159.5Q2374 158.5 2375.5 162L2379 172Q2380.5 175.5 2384.8 172" fill="none" stroke="#8a9ab5" stroke-width="2.6" stroke-linecap="round"/>
<path d="M2385.5 160.2Q2382 159 2378 163.5L2373 171Q2371 174.5 2368.7 174" fill="none" stroke="#8a9ab5" stroke-width="1.8" stroke-linecap="round"/>
<circle cx="2385.6" cy="160.3" r="1.5" fill="#8a9ab5"/><circle cx="2368.9" cy="174" r="1.5" fill="#8a9ab5"/>
</svg>
<div style="position:absolute;left:272px;top:449px;width:396px;height:644px;background:#fff;border:2px solid #217346;box-sizing:border-box"></div>
<svg style="position:absolute;left:286px;top:469px;" width="26" height="24" viewBox="0 0 26 24"><rect x="1" y="1" width="24" height="22" fill="#fff" stroke="#727272" stroke-width="2"/><rect x="0" y="0" width="26" height="6" fill="#727272"/><path d="M9 6V22M17 6V22M2 11H24M2 16.5H24" stroke="#b9b9b9" stroke-width="1.6"/></svg>
<div class="t" style="left:325.50px;top:466.8px;font-size:25px;line-height:30.00px;color:#217346;font-weight:700;letter-spacing:-0.188px;">Customers</div>
<svg style="position:absolute;left:318px;top:527px;" width="26" height="24" viewBox="0 0 26 24"><rect x="1" y="1" width="24" height="22" fill="#fff" stroke="#727272" stroke-width="2"/><rect x="0" y="0" width="26" height="5" fill="#727272"/><path d="M8.5 5V22M17 5V22M2 11.5H17M2 17H17" stroke="#b5b5b5" stroke-width="1.6"/></svg>
<div class="t" style="left:357.60px;top:525.3px;font-size:25px;line-height:30.00px;color:#5f5c5c;font-weight:700;letter-spacing:-0.100px;">CustomerKey</div>
<svg style="position:absolute;left:318px;top:575px;" width="26" height="24" viewBox="0 0 26 24"><rect x="1" y="1" width="24" height="22" fill="#fff" stroke="#727272" stroke-width="2"/><rect x="0" y="0" width="26" height="5" fill="#727272"/><path d="M8.5 5V22M17 5V22M2 11.5H17M2 17H17" stroke="#b5b5b5" stroke-width="1.6"/></svg>
<div class="t" style="left:357.60px;top:573.3px;font-size:25px;line-height:30.00px;color:#5f5c5c;font-weight:700;letter-spacing:0.392px;">Customer Name</div>
<svg style="position:absolute;left:318px;top:622px;" width="26" height="24" viewBox="0 0 26 24"><rect x="1" y="1" width="24" height="22" fill="#fff" stroke="#727272" stroke-width="2"/><rect x="0" y="0" width="26" height="5" fill="#727272"/><path d="M8.5 5V22M17 5V22M2 11.5H17M2 17H17" stroke="#b5b5b5" stroke-width="1.6"/></svg>
<div class="t" style="left:357.80px;top:620.3px;font-size:25px;line-height:30.00px;color:#5f5c5c;font-weight:700;letter-spacing:0.562px;">BirthDate</div>
<svg style="position:absolute;left:318px;top:670px;" width="26" height="24" viewBox="0 0 26 24"><rect x="1" y="1" width="24" height="22" fill="#fff" stroke="#727272" stroke-width="2"/><rect x="0" y="0" width="26" height="5" fill="#727272"/><path d="M8.5 5V22M17 5V22M2 11.5H17M2 17H17" stroke="#b5b5b5" stroke-width="1.6"/></svg>
<div class="t" style="left:357.80px;top:668.3px;font-size:25px;line-height:30.00px;color:#5f5c5c;font-weight:700;letter-spacing:0.658px;">MaritalStatus</div>
<svg style="position:absolute;left:318px;top:718px;" width="26" height="24" viewBox="0 0 26 24"><rect x="1" y="1" width="24" height="22" fill="#fff" stroke="#727272" stroke-width="2"/><rect x="0" y="0" width="26" height="5" fill="#727272"/><path d="M8.5 5V22M17 5V22M2 11.5H17M2 17H17" stroke="#b5b5b5" stroke-width="1.6"/></svg>
<div class="t" style="left:357.60px;top:716.3px;font-size:25px;line-height:30.00px;color:#5f5c5c;font-weight:700;letter-spacing:0.460px;">Gender</div>
<svg style="position:absolute;left:318px;top:766px;" width="26" height="24" viewBox="0 0 26 24"><rect x="1" y="1" width="24" height="22" fill="#fff" stroke="#727272" stroke-width="2"/><rect x="0" y="0" width="26" height="5" fill="#727272"/><path d="M8.5 5V22M17 5V22M2 11.5H17M2 17H17" stroke="#b5b5b5" stroke-width="1.6"/></svg>
<div class="t" style="left:357.80px;top:764.3px;font-size:25px;line-height:30.00px;color:#5f5c5c;font-weight:700;letter-spacing:-0.191px;">EmailAddress</div>
<svg style="position:absolute;left:318px;top:814px;" width="26" height="24" viewBox="0 0 26 24"><rect x="1" y="1" width="24" height="22" fill="#fff" stroke="#727272" stroke-width="2"/><rect x="0" y="0" width="26" height="5" fill="#727272"/><path d="M8.5 5V22M17 5V22M2 11.5H17M2 17H17" stroke="#b5b5b5" stroke-width="1.6"/></svg>
<div class="t" style="left:357.60px;top:812.3px;font-size:25px;line-height:30.00px;color:#5f5c5c;font-weight:700;letter-spacing:0.482px;">AnnualIncome</div>
<svg style="position:absolute;left:318px;top:861px;" width="26" height="24" viewBox="0 0 26 24"><rect x="1" y="1" width="24" height="22" fill="#fff" stroke="#727272" stroke-width="2"/><rect x="0" y="0" width="26" height="5" fill="#727272"/><path d="M8.5 5V22M17 5V22M2 11.5H17M2 17H17" stroke="#b5b5b5" stroke-width="1.6"/></svg>
<div class="t" style="left:358.20px;top:859.3px;font-size:25px;line-height:30.00px;color:#5f5c5c;font-weight:700;letter-spacing:0.142px;">TotalChildren</div>
<svg style="position:absolute;left:318px;top:909px;" width="26" height="24" viewBox="0 0 26 24"><rect x="1" y="1" width="24" height="22" fill="#fff" stroke="#727272" stroke-width="2"/><rect x="0" y="0" width="26" height="5" fill="#727272"/><path d="M8.5 5V22M17 5V22M2 11.5H17M2 17H17" stroke="#b5b5b5" stroke-width="1.6"/></svg>
<div class="t" style="left:357.80px;top:907.3px;font-size:25px;line-height:30.00px;color:#5f5c5c;font-weight:700;letter-spacing:-0.115px;">EducationLevel</div>
<svg style="position:absolute;left:318px;top:957px;" width="26" height="24" viewBox="0 0 26 24"><rect x="1" y="1" width="24" height="22" fill="#fff" stroke="#727272" stroke-width="2"/><rect x="0" y="0" width="26" height="5" fill="#727272"/><path d="M8.5 5V22M17 5V22M2 11.5H17M2 17H17" stroke="#b5b5b5" stroke-width="1.6"/></svg>
<div class="t" style="left:357.60px;top:955.3px;font-size:25px;line-height:30.00px;color:#5f5c5c;font-weight:700;letter-spacing:0.133px;">Occupation</div>
<svg style="position:absolute;left:318px;top:1005px;" width="26" height="24" viewBox="0 0 26 24"><rect x="1" y="1" width="24" height="22" fill="#fff" stroke="#727272" stroke-width="2"/><rect x="0" y="0" width="26" height="5" fill="#727272"/><path d="M8.5 5V22M17 5V22M2 11.5H17M2 17H17" stroke="#b5b5b5" stroke-width="1.6"/></svg>
<div class="t" style="left:357.80px;top:1003.3px;font-size:25px;line-height:30.00px;color:#5f5c5c;font-weight:700;letter-spacing:0.975px;">HomeOwner</div>
<div style="position:absolute;left:1040px;top:513px;width:396px;height:632px;background:#fff;border:2px solid #217346;box-sizing:border-box"></div>
<svg style="position:absolute;left:1054px;top:533px;" width="26" height="24" viewBox="0 0 26 24"><rect x="1" y="1" width="24" height="22" fill="#fff" stroke="#727272" stroke-width="2"/><rect x="0" y="0" width="26" height="6" fill="#727272"/><path d="M9 6V22M17 6V22M2 11H24M2 16.5H24" stroke="#b9b9b9" stroke-width="1.6"/></svg>
<div class="t" style="left:1093.70px;top:530.8px;font-size:25px;line-height:30.00px;color:#217346;font-weight:700;letter-spacing:-0.600px;">Sales</div>
<svg style="position:absolute;left:1086px;top:591px;" width="26" height="24" viewBox="0 0 26 24"><rect x="1" y="1" width="24" height="22" fill="#fff" stroke="#727272" stroke-width="2"/><rect x="0" y="0" width="26" height="5" fill="#727272"/><path d="M8.5 5V22M17 5V22M2 11.5H17M2 17H17" stroke="#b5b5b5" stroke-width="1.6"/></svg>
<div class="t" style="left:1125.60px;top:589.3px;font-size:25px;line-height:30.00px;color:#5f5c5c;font-weight:700;letter-spacing:0.800px;">OrderDate</div>
<svg style="position:absolute;left:1086px;top:639px;" width="26" height="24" viewBox="0 0 26 24"><rect x="1" y="1" width="24" height="22" fill="#fff" stroke="#727272" stroke-width="2"/><rect x="0" y="0" width="26" height="5" fill="#727272"/><path d="M8.5 5V22M17 5V22M2 11.5H17M2 17H17" stroke="#b5b5b5" stroke-width="1.6"/></svg>
<div class="t" style="left:1125.60px;top:637.3px;font-size:25px;line-height:30.00px;color:#5f5c5c;font-weight:700;letter-spacing:0.213px;">StockDate</div>
<svg style="position:absolute;left:1086px;top:686px;" width="26" height="24" viewBox="0 0 26 24"><rect x="1" y="1" width="24" height="22" fill="#fff" stroke="#727272" stroke-width="2"/><rect x="0" y="0" width="26" height="5" fill="#727272"/><path d="M8.5 5V22M17 5V22M2 11.5H17M2 17H17" stroke="#b5b5b5" stroke-width="1.6"/></svg>
<div class="t" style="left:1125.60px;top:684.3px;font-size:25px;line-height:30.00px;color:#5f5c5c;font-weight:700;letter-spacing:0.840px;">OrderNumber</div>
<svg style="position:absolute;left:1086px;top:734px;" width="26" height="24" viewBox="0 0 26 24"><rect x="1" y="1" width="24" height="22" fill="#fff" stroke="#727272" stroke-width="2"/><rect x="0" y="0" width="26" height="5" fill="#727272"/><path d="M8.5 5V22M17 5V22M2 11.5H17M2 17H17" stroke="#b5b5b5" stroke-width="1.6"/></svg>
<div class="t" style="left:1125.80px;top:732.3px;font-size:25px;line-height:30.00px;color:#5f5c5c;font-weight:700;letter-spacing:-0.111px;">ProductKey</div>
<svg style="position:absolute;left:1086px;top:782px;" width="26" height="24" viewBox="0 0 26 24"><rect x="1" y="1" width="24" height="22" fill="#fff" stroke="#727272" stroke-width="2"/><rect x="0" y="0" width="26" height="5" fill="#727272"/><path d="M8.5 5V22M17 5V22M2 11.5H17M2 17H17" stroke="#b5b5b5" stroke-width="1.6"/></svg>
<div class="t" style="left:1125.60px;top:780.3px;font-size:25px;line-height:30.00px;color:#5f5c5c;font-weight:700;letter-spacing:-0.130px;">CustomerKey</div>
<svg style="position:absolute;left:1086px;top:830px;" width="26" height="24" viewBox="0 0 26 24"><rect x="1" y="1" width="24" height="22" fill="#fff" stroke="#727272" stroke-width="2"/><rect x="0" y="0" width="26" height="5" fill="#727272"/><path d="M8.5 5V22M17 5V22M2 11.5H17M2 17H17" stroke="#b5b5b5" stroke-width="1.6"/></svg>
<div class="t" style="left:1126.20px;top:828.3px;font-size:25px;line-height:30.00px;color:#5f5c5c;font-weight:700;letter-spacing:0.073px;">TerritoryKey</div>
<svg style="position:absolute;left:1086px;top:878px;" width="26" height="24" viewBox="0 0 26 24"><rect x="1" y="1" width="24" height="22" fill="#fff" stroke="#727272" stroke-width="2"/><rect x="0" y="0" width="26" height="5" fill="#727272"/><path d="M8.5 5V22M17 5V22M2 11.5H17M2 17H17" stroke="#b5b5b5" stroke-width="1.6"/></svg>
<div class="t" style="left:1125.60px;top:876.3px;font-size:25px;line-height:30.00px;color:#5f5c5c;font-weight:700;letter-spacing:0.592px;">OrderLineItem</div>
<svg style="position:absolute;left:1086px;top:925px;" width="26" height="24" viewBox="0 0 26 24"><rect x="1" y="1" width="24" height="22" fill="#fff" stroke="#727272" stroke-width="2"/><rect x="0" y="0" width="26" height="5" fill="#727272"/><path d="M8.5 5V22M17 5V22M2 11.5H17M2 17H17" stroke="#b5b5b5" stroke-width="1.6"/></svg>
<div class="t" style="left:1125.60px;top:923.3px;font-size:25px;line-height:30.00px;color:#5f5c5c;font-weight:700;letter-spacing:0.708px;">OrderQuantity</div>
<svg style="position:absolute;left:1086px;top:973px;" width="26" height="24" viewBox="0 0 26 24"><rect x="1" y="1" width="24" height="22" fill="#fff" stroke="#727272" stroke-width="2"/><rect x="0" y="0" width="26" height="5" fill="#727272"/><path d="M8.5 5V22M17 5V22M2 11.5H17M2 17H17" stroke="#b5b5b5" stroke-width="1.6"/></svg>
<div class="t" style="left:1125.60px;top:971.3px;font-size:25px;line-height:30.00px;color:#5f5c5c;font-weight:700;letter-spacing:-0.675px;">Sales</div>
<svg style="position:absolute;left:0px;top:0px;left:0;top:0" width="2518" height="1351" viewBox="0 0 2518 1351"><g transform="translate(0.0 0.0)"><path d="M1088 1023.6H1086.2V1039.8H1088" fill="none" stroke="#555" stroke-width="1.3"/><rect x="1096.2" y="1023.8" width="17" height="16" fill="none" stroke="#555" stroke-width="1.5"/><path d="M1103.5 1017.6Q1099 1016 1096.5 1020Q1094.5 1024 1093 1033Q1091.5 1043.5 1089 1046.5Q1087 1048.5 1084.2 1047.5" fill="none" stroke="#555" stroke-width="2.1"/><path d="M1090.5 1026.8H1098" stroke="#555" stroke-width="1.2"/><path d="M1100.5 1028Q1103 1027 1104.5 1030L1107 1036.5Q1108.5 1038.8 1111 1037.5M1110.8 1028.2Q1108.5 1027.8 1106.5 1031L1103 1036Q1101.5 1038.5 1099.5 1037.6" fill="none" stroke="#555" stroke-width="1.5"/></g></svg>
<div class="t" style="left:1126.20px;top:1019.3px;font-size:25px;line-height:30.00px;color:#5f5c5c;font-weight:700;letter-spacing:-0.220px;">Total Sales</div>
<div style="position:absolute;left:1042px;top:1057px;width:392px;height:48px;background:#9fd4b6"></div>
<svg style="position:absolute;left:0px;top:0px;left:0;top:0" width="2518" height="1351" viewBox="0 0 2518 1351"><g transform="translate(0.0 48.0)"><path d="M1088 1023.6H1086.2V1039.8H1088" fill="none" stroke="#555" stroke-width="1.3"/><rect x="1096.2" y="1023.8" width="17" height="16" fill="none" stroke="#555" stroke-width="1.5"/><path d="M1103.5 1017.6Q1099 1016 1096.5 1020Q1094.5 1024 1093 1033Q1091.5 1043.5 1089 1046.5Q1087 1048.5 1084.2 1047.5" fill="none" stroke="#555" stroke-width="2.1"/><path d="M1090.5 1026.8H1098" stroke="#555" stroke-width="1.2"/><path d="M1100.5 1028Q1103 1027 1104.5 1030L1107 1036.5Q1108.5 1038.8 1111 1037.5M1110.8 1028.2Q1108.5 1027.8 1106.5 1031L1103 1036Q1101.5 1038.5 1099.5 1037.6" fill="none" stroke="#555" stroke-width="1.5"/></g></svg>
<div class="t" style="left:1126.20px;top:1067.3px;font-size:25px;line-height:30.00px;color:#5f5c5c;font-weight:700;letter-spacing:0.388px;">Total Qty</div>
<div style="position:absolute;left:1748px;top:363px;width:396px;height:752px;background:#fff;border:2px solid #217346;box-sizing:border-box"></div>
<svg style="position:absolute;left:1762px;top:383px;" width="26" height="24" viewBox="0 0 26 24"><rect x="1" y="1" width="24" height="22" fill="#fff" stroke="#727272" stroke-width="2"/><rect x="0" y="0" width="26" height="6" fill="#727272"/><path d="M9 6V22M17 6V22M2 11H24M2 16.5H24" stroke="#b9b9b9" stroke-width="1.6"/></svg>
<div class="t" style="left:1801.00px;top:380.8px;font-size:25px;line-height:30.00px;color:#217346;font-weight:700;letter-spacing:-0.014px;">Products</div>
<svg style="position:absolute;left:1794px;top:441px;" width="26" height="24" viewBox="0 0 26 24"><rect x="1" y="1" width="24" height="22" fill="#fff" stroke="#727272" stroke-width="2"/><rect x="0" y="0" width="26" height="5" fill="#727272"/><path d="M8.5 5V22M17 5V22M2 11.5H17M2 17H17" stroke="#b5b5b5" stroke-width="1.6"/></svg>
<div class="t" style="left:1833.80px;top:439.3px;font-size:25px;line-height:30.00px;color:#5f5c5c;font-weight:700;letter-spacing:-0.156px;">ProductKey</div>
<svg style="position:absolute;left:1794px;top:489px;" width="26" height="24" viewBox="0 0 26 24"><rect x="1" y="1" width="24" height="22" fill="#fff" stroke="#727272" stroke-width="2"/><rect x="0" y="0" width="26" height="5" fill="#727272"/><path d="M8.5 5V22M17 5V22M2 11.5H17M2 17H17" stroke="#b5b5b5" stroke-width="1.6"/></svg>
<div class="t" style="left:1833.80px;top:487.3px;font-size:25px;line-height:30.00px;color:#5f5c5c;font-weight:700;letter-spacing:-0.157px;">ProductSubcategoryK...</div>
<svg style="position:absolute;left:1794px;top:536px;" width="26" height="24" viewBox="0 0 26 24"><rect x="1" y="1" width="24" height="22" fill="#fff" stroke="#727272" stroke-width="2"/><rect x="0" y="0" width="26" height="5" fill="#727272"/><path d="M8.5 5V22M17 5V22M2 11.5H17M2 17H17" stroke="#b5b5b5" stroke-width="1.6"/></svg>
<div class="t" style="left:1833.80px;top:534.3px;font-size:25px;line-height:30.00px;color:#5f5c5c;font-weight:700;letter-spacing:-0.411px;">ProductSKU</div>
<svg style="position:absolute;left:1794px;top:584px;" width="26" height="24" viewBox="0 0 26 24"><rect x="1" y="1" width="24" height="22" fill="#fff" stroke="#727272" stroke-width="2"/><rect x="0" y="0" width="26" height="5" fill="#727272"/><path d="M8.5 5V22M17 5V22M2 11.5H17M2 17H17" stroke="#b5b5b5" stroke-width="1.6"/></svg>
<div class="t" style="left:1833.80px;top:582.3px;font-size:25px;line-height:30.00px;color:#5f5c5c;font-weight:700;letter-spacing:0.390px;">ProductName</div>
<svg style="position:absolute;left:1794px;top:632px;" width="26" height="24" viewBox="0 0 26 24"><rect x="1" y="1" width="24" height="22" fill="#fff" stroke="#727272" stroke-width="2"/><rect x="0" y="0" width="26" height="5" fill="#727272"/><path d="M8.5 5V22M17 5V22M2 11.5H17M2 17H17" stroke="#b5b5b5" stroke-width="1.6"/></svg>
<div class="t" style="left:1833.80px;top:630.3px;font-size:25px;line-height:30.00px;color:#5f5c5c;font-weight:700;letter-spacing:1.275px;">ModelName</div>
<svg style="position:absolute;left:1794px;top:680px;" width="26" height="24" viewBox="0 0 26 24"><rect x="1" y="1" width="24" height="22" fill="#fff" stroke="#727272" stroke-width="2"/><rect x="0" y="0" width="26" height="5" fill="#727272"/><path d="M8.5 5V22M17 5V22M2 11.5H17M2 17H17" stroke="#b5b5b5" stroke-width="1.6"/></svg>
<div class="t" style="left:1833.80px;top:678.3px;font-size:25px;line-height:30.00px;color:#5f5c5c;font-weight:700;letter-spacing:0.112px;">ProductDescription</div>
<svg style="position:absolute;left:1794px;top:728px;" width="26" height="24" viewBox="0 0 26 24"><rect x="1" y="1" width="24" height="22" fill="#fff" stroke="#727272" stroke-width="2"/><rect x="0" y="0" width="26" height="5" fill="#727272"/><path d="M8.5 5V22M17 5V22M2 11.5H17M2 17H17" stroke="#b5b5b5" stroke-width="1.6"/></svg>
<div class="t" style="left:1833.80px;top:726.3px;font-size:25px;line-height:30.00px;color:#5f5c5c;font-weight:700;letter-spacing:-0.027px;">ProductColor</div>
<svg style="position:absolute;left:1794px;top:775px;" width="26" height="24" viewBox="0 0 26 24"><rect x="1" y="1" width="24" height="22" fill="#fff" stroke="#727272" stroke-width="2"/><rect x="0" y="0" width="26" height="5" fill="#727272"/><path d="M8.5 5V22M17 5V22M2 11.5H17M2 17H17" stroke="#b5b5b5" stroke-width="1.6"/></svg>
<div class="t" style="left:1833.80px;top:773.3px;font-size:25px;line-height:30.00px;color:#5f5c5c;font-weight:700;letter-spacing:-0.260px;">ProductSize</div>
<svg style="position:absolute;left:1794px;top:823px;" width="26" height="24" viewBox="0 0 26 24"><rect x="1" y="1" width="24" height="22" fill="#fff" stroke="#727272" stroke-width="2"/><rect x="0" y="0" width="26" height="5" fill="#727272"/><path d="M8.5 5V22M17 5V22M2 11.5H17M2 17H17" stroke="#b5b5b5" stroke-width="1.6"/></svg>
<div class="t" style="left:1833.80px;top:821.3px;font-size:25px;line-height:30.00px;color:#5f5c5c;font-weight:700;letter-spacing:0.073px;">ProductStyle</div>
<svg style="position:absolute;left:1794px;top:871px;" width="26" height="24" viewBox="0 0 26 24"><rect x="1" y="1" width="24" height="22" fill="#fff" stroke="#727272" stroke-width="2"/><rect x="0" y="0" width="26" height="5" fill="#727272"/><path d="M8.5 5V22M17 5V22M2 11.5H17M2 17H17" stroke="#b5b5b5" stroke-width="1.6"/></svg>
<div class="t" style="left:1833.80px;top:869.3px;font-size:25px;line-height:30.00px;color:#5f5c5c;font-weight:700;letter-spacing:-0.300px;">ProductCost</div>
<svg style="position:absolute;left:1794px;top:919px;" width="26" height="24" viewBox="0 0 26 24"><rect x="1" y="1" width="24" height="22" fill="#fff" stroke="#727272" stroke-width="2"/><rect x="0" y="0" width="26" height="5" fill="#727272"/><path d="M8.5 5V22M17 5V22M2 11.5H17M2 17H17" stroke="#b5b5b5" stroke-width="1.6"/></svg>
<div class="t" style="left:1833.80px;top:917.3px;font-size:25px;line-height:30.00px;color:#5f5c5c;font-weight:700;letter-spacing:-0.064px;">ProductPrice</div>
<svg style="position:absolute;left:1794px;top:967px;" width="26" height="24" viewBox="0 0 26 24"><rect x="1" y="1" width="24" height="22" fill="#fff" stroke="#727272" stroke-width="2"/><rect x="0" y="0" width="26" height="5" fill="#727272"/><path d="M8.5 5V22M17 5V22M2 11.5H17M2 17H17" stroke="#b5b5b5" stroke-width="1.6"/></svg>
<div class="t" style="left:1833.60px;top:965.3px;font-size:25px;line-height:30.00px;color:#5f5c5c;font-weight:700;letter-spacing:0.157px;">SubcategoryName</div>
<svg style="position:absolute;left:1794px;top:1014px;" width="26" height="24" viewBox="0 0 26 24"><rect x="1" y="1" width="24" height="22" fill="#fff" stroke="#727272" stroke-width="2"/><rect x="0" y="0" width="26" height="5" fill="#727272"/><path d="M8.5 5V22M17 5V22M2 11.5H17M2 17H17" stroke="#b5b5b5" stroke-width="1.6"/></svg>
<div class="t" style="left:1833.60px;top:1012.3px;font-size:25px;line-height:30.00px;color:#5f5c5c;font-weight:700;letter-spacing:0.336px;">CategoryName</div>
<svg style="position:absolute;left:0px;top:0px;pointer-events:none" width="2518" height="1351" viewBox="0 0 2518 1351">
<path d="M702 771H850L854 775V792M854 808V825L858 828.7H1006" fill="none" stroke="#3a3a3a" stroke-width="2.2"/>
<rect x="846" y="792" width="16" height="16" fill="#404040"/>
<path d="M847.8 795H860.2L854 805.6Z" fill="#f0f0f0"/>
<path d="M1470 828.7H1588L1592 825V792M1592 776V743L1596 738.6H1714" fill="none" stroke="#3a3a3a" stroke-width="2.2"/>
<rect x="1584" y="776" width="16" height="16" fill="#404040"/>
<path d="M1585.8 779H1598.2L1592 789.6Z" fill="#f0f0f0"/>
</svg>
<div class="t" style="left:671.0px;width:30px;text-align:center;top:759.1px;font-size:25px;line-height:30.00px;color:#333;font-weight:400;">1</div>
<div class="t" style="left:1714.5px;width:30px;text-align:center;top:726.7px;font-size:25px;line-height:30.00px;color:#333;font-weight:400;">1</div>
<div class="t" style="left:1007.0px;width:30px;text-align:center;top:814.5px;font-size:28px;line-height:33.60px;color:#333;font-weight:400;">*</div>
<div class="t" style="left:1439.0px;width:30px;text-align:center;top:814.5px;font-size:28px;line-height:33.60px;color:#333;font-weight:400;">*</div>
<div style="position:absolute;left:3px;top:1304px;width:2508px;height:44px;background:#217346;border-top:1px solid #17693b;border-bottom:1px solid #17693b;box-sizing:border-box"></div>
<div class="t" style="left:2295.60px;top:1312.9px;font-size:23px;line-height:27.60px;color:#fff;font-weight:400;letter-spacing:0.333px;">Display</div>
<svg style="position:absolute;left:0;top:0" width="2518" height="1351">
<rect x="1353.3" y="530.2" width="30.3" height="30.2" fill="#fff" stroke="#6b6b6b" stroke-width="2"/>
<path d="M1356.1 536.2Q1356.1 534.5 1357.8 534.5H1362.5L1363.8 533H1366.5V541.9H1356.1Z" fill="#e9c27d"/>
<path d="M1369.5 540.7Q1369.5 539 1371.2 539H1375.5L1377 537.3H1380V546.2H1369.5Z" fill="#e9c27d"/>
<path d="M1369.5 551.1Q1369.5 549.4 1371.2 549.4H1375.5L1377 547.8H1380V556.7H1369.5Z" fill="#e9c27d"/>
<path d="M1363.4 545.4H1367.8M1365.6 543.2V547.6M1363.4 553H1367.8M1365.6 550.8V555.2" stroke="#555" stroke-width="1.1"/>
<rect x="1389.3" y="530.2" width="30.3" height="30.2" fill="#fff" stroke="#6b6b6b" stroke-width="2"/>
<rect x="1394.2" y="536.6" width="19.6" height="16.8" fill="none" stroke="#707070" stroke-width="1.2"/>
<rect x="1398.8" y="541" width="10.6" height="7.6" fill="none" stroke="#666" stroke-width="1.3"/>

<path d="M1869.9 1308.5H1880.4L1875.2 1314Z M1869.9 1339.3H1880.4L1875.2 1334Z M1858.5 1319L1865 1324.2L1858.5 1329.4Z M1891.2 1319L1885 1324.2L1891.2 1329.4Z" fill="#ffffff"/>
<rect x="1870" y="1319.2" width="10" height="10" fill="#ffffff"/>
<rect x="1906" y="1325.2" width="16" height="2.6" fill="#ffffff"/>
<rect x="1931.3" y="1307" width="3.3" height="35.7" fill="#ffffff"/>
<rect x="1934" y="1324" width="233" height="1.8" fill="#ffffff"/>
<rect x="2048.4" y="1321" width="1.6" height="8" fill="#ffffff"/>
<path d="M2177.8 1326.7H2194M2185.9 1318.5V1335" stroke="#ffffff" stroke-width="2.4"/>
<rect x="2423.5" y="1319.8" width="12" height="12" fill="none" stroke="#ffffff" stroke-width="1"/>
<path d="M2427.5 1319.8V1331.8M2431.5 1319.8V1331.8M2423.5 1323.8H2435.5M2423.5 1327.8H2435.5" stroke="#ffffff" stroke-width="1"/>

<rect x="2452.1" y="1304.3" width="22.8" height="42.5" fill="#0a4a28"/>
<path d="M2462 1324.5L2464 1321M2462 1325L2464 1329" stroke="#fff" stroke-width="1"/>
<rect x="2455" y="1321" width="7" height="7" fill="#fff"/><rect x="2456" y="1324" width="5" height="2.6" fill="#0a4a28"/>
<rect x="2463.9" y="1317" width="7.1" height="7" fill="#fff"/><rect x="2464.9" y="1320" width="5.1" height="2.6" fill="#0a4a28"/>
<rect x="2463.9" y="1326.2" width="7.1" height="6.7" fill="#fff"/><rect x="2464.9" y="1329" width="5.1" height="2.6" fill="#0a4a28"/>
<g fill="#fff"><rect x="2506" y="1335" width="2" height="2"/><rect x="2502" y="1339" width="2" height="2"/><rect x="2506" y="1339" width="2" height="2"/><rect x="2498" y="1343" width="2" height="2"/><rect x="2502" y="1343" width="2" height="2"/><rect x="2506" y="1343" width="2" height="2"/></g>
<g fill="#b9aebb"><rect x="2505" y="1334" width="1.3" height="1.3"/><rect x="2501" y="1338" width="1.3" height="1.3"/><rect x="2505" y="1338" width="1.3" height="1.3"/><rect x="2497" y="1342" width="1.3" height="1.3"/><rect x="2501" y="1342" width="1.3" height="1.3"/><rect x="2505" y="1342" width="1.3" height="1.3"/></g>
</svg>
</body></html>
